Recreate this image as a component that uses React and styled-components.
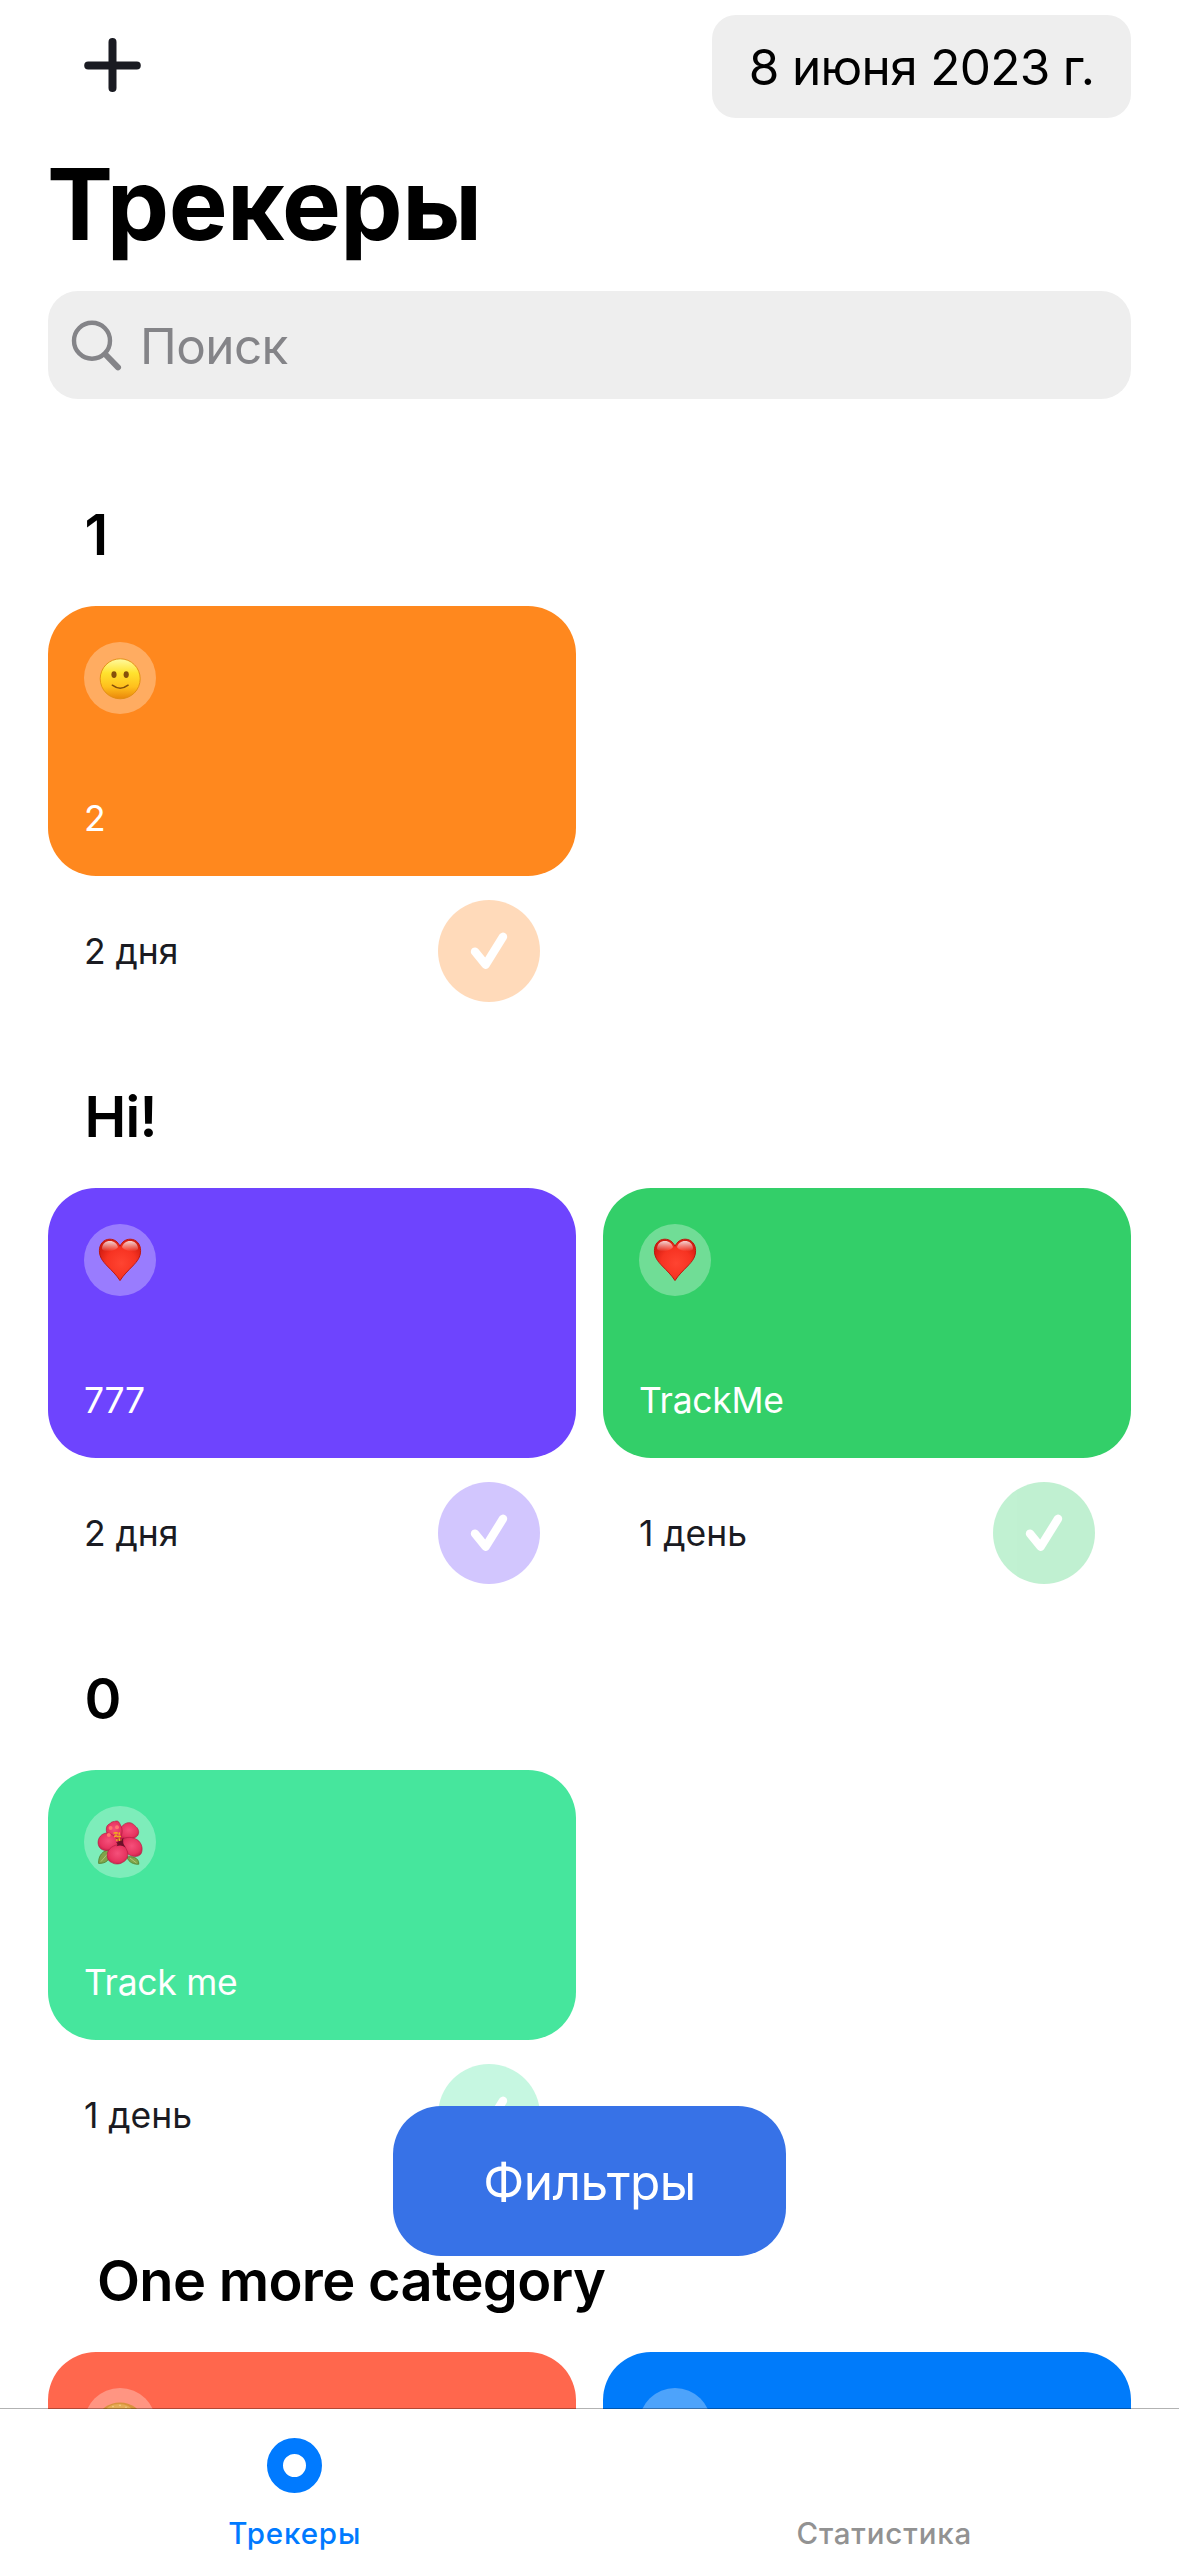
import React from "react";
import styled, { createGlobalStyle } from "styled-components";

const GlobalStyle = createGlobalStyle`
  *, *::before, *::after { box-sizing: border-box; }
  body {
    margin: 0;
    background: #fff;
    overflow: hidden;
    font-family: Inter, "Liberation Sans", sans-serif;
  }
  button { border: 0; padding: 0; background: none; font: inherit; color: inherit; }
`;

const Screen = styled.div`
  width: 1179px;
  height: 2556px;
  display: flex;
  flex-direction: column;
  overflow: hidden;
  background: #fff;
`;

const Header = styled.header`
  display: flex;
  flex-direction: column;
  flex: none;
  padding: 15px 48px 0;
`;

const NavRow = styled.div`
  display: flex;
  justify-content: space-between;
  align-items: center;
  height: 103px;
  padding-left: 36px;
`;

const AddButton = styled.button`
  display: flex;
  width: 58px;
  height: 58px;
  margin-bottom: 3px;
`;

const DatePill = styled.button`
  width: 419px;
  height: 103px;
  padding-top: 2px;
  border-radius: 24px;
  background: #eeeeee;
  color: #000;
  font-size: 49.5px;
  line-height: 101px;
  letter-spacing: -0.68px;
  text-align: center;
  white-space: nowrap;
`;

const Title = styled.h1`
  margin: 26px 0 27px -1px;
  font-size: 99px;
  font-weight: 700;
  line-height: 120px;
  letter-spacing: -0.6px;
  color: #000;
`;

const SearchField = styled.div`
  display: flex;
  align-items: center;
  gap: 16px;
  height: 108px;
  padding-left: 22px;
  border-radius: 30px;
  background: #eeeeee;
`;

const SearchIcon = styled.svg`
  flex: none;
  width: 54px;
  height: 54px;
`;

const Placeholder = styled.span`
  padding-top: 2px;
  font-size: 49.5px;
  line-height: 60px;
  letter-spacing: -0.6px;
  color: #848488;
`;

const TrackerList = styled.main`
  flex: 1;
  min-height: 0;
  overflow: hidden;
  display: flex;
  flex-direction: column;
  gap: 85px;
  padding: 106px 48px 0;
`;

const Section = styled.section`
  flex: none;
  display: flex;
  flex-direction: column;
  gap: 41px;
`;

const SectionTitle = styled.h2`
  margin: 0;
  padding-left: ${(p) => (p.$indent ? 49 : 36.5)}px;
  font-size: 56px;
  font-weight: 600;
  line-height: 60px;
  letter-spacing: -0.7px;
  color: #000;
`;

const CardGrid = styled.div`
  display: grid;
  grid-template-columns: 528px 528px;
  column-gap: 27px;
`;

const Card = styled.article`
  display: flex;
  flex-direction: column;
  justify-content: space-between;
  height: 270px;
  padding: 36px 36px 30px;
  border-radius: 48px;
  background: ${(p) => p.$color};
`;

const EmojiBadge = styled.div`
  display: flex;
  width: 72px;
  height: 72px;
  border-radius: 50%;
  background: rgba(255, 255, 255, 0.3);
`;

const CardName = styled.div`
  min-height: 54px;
  font-size: 35.5px;
  line-height: 54px;
  letter-spacing: -0.3px;
  color: #fff;
`;

const CardFooter = styled.div`
  display: flex;
  justify-content: space-between;
  align-items: center;
  padding: 24px 36px 0;
`;

const DayCount = styled.span`
  padding-top: 2px;
  font-size: 35.5px;
  line-height: 54px;
  letter-spacing: -0.05px;
  color: #1a1b22;
`;

const DoneButton = styled.button`
  display: flex;
  width: 102px;
  height: 102px;
  border-radius: 50%;
  background: ${(p) => p.$color};
  opacity: 0.3;
`;

const FilterButton = styled.button`
  position: absolute;
  left: 393px;
  top: 2106px;
  width: 393px;
  height: 150px;
  padding-top: 1px;
  border-radius: 48px;
  background: #3772e7;
  color: #fff;
  font-size: 49.5px;
  letter-spacing: -0.5px;
  text-align: center;
`;

const TabBar = styled.nav`
  position: relative;
  flex: none;
  display: grid;
  grid-template-columns: 1fr 1fr;
  height: 148px;
  margin-top: -1px;
  border-top: 1px solid rgba(0, 0, 0, 0.3);
  background: #fff;
  background-clip: padding-box;
`;

const Tab = styled.button`
  display: flex;
  flex-direction: column;
  justify-content: flex-end;
  align-items: center;
  gap: 22px;
  padding-bottom: 5px;
  color: ${(p) => (p.$active ? "#007aff" : "#929292")};
  font-size: 29.5px;
  font-weight: 500;
  line-height: 36px;
  letter-spacing: 0.85px;
`;

const TabDot = styled.span`
  width: 55px;
  height: 55px;
  border: 16.5px solid #007aff;
  border-radius: 50%;
`;

function PlusIcon() {
  return (
    <svg width="58" height="58" viewBox="0 0 58 58" stroke="#1a1b22" strokeWidth="8" strokeLinecap="round">
      <path d="M28.5 6V52M4.2 29.5H52.8" />
    </svg>
  );
}

function CheckIcon() {
  return (
    <svg width="102" height="102" viewBox="0 0 102 102" fill="none" stroke="#fff" strokeWidth="8.4" strokeLinecap="round" strokeLinejoin="round">
      <path d="M37 51.6L47.6 64.7L65 36.8" />
    </svg>
  );
}

function Smile() {
  return (
    <svg width="72" height="72" viewBox="0 0 72 72">
      <defs>
        <linearGradient id="face" x1="0" y1="0" x2="0" y2="1">
          <stop offset="0" stopColor="#fff9a0" />
          <stop offset="0.35" stopColor="#ffe32f" />
          <stop offset="0.7" stopColor="#ffc01d" />
          <stop offset="1" stopColor="#ea860a" />
        </linearGradient>
      </defs>
      <circle cx="36.2" cy="36.8" r="20" fill="url(#face)" stroke="#e08c10" strokeWidth="0.9" />
      <ellipse cx="30" cy="32.6" rx="2.6" ry="3.4" fill="#85500b" />
      <ellipse cx="42.2" cy="32.6" rx="2.6" ry="3.4" fill="#85500b" />
      <path d="M28.3 43.2Q36.2 49.2 44.1 43.2" fill="none" stroke="#85500b" strokeWidth="1.5" strokeLinecap="round" />
    </svg>
  );
}

function Heart() {
  return (
    <svg width="72" height="72" viewBox="0 0 72 72">
      <defs>
        <radialGradient id="heart" cx="0.53" cy="0.58" r="0.6">
          <stop offset="0" stopColor="#ff4431" />
          <stop offset="0.6" stopColor="#f73322" />
          <stop offset="1" stopColor="#d31d11" />
        </radialGradient>
        <linearGradient id="shine" x1="0" y1="0" x2="0" y2="1">
          <stop offset="0" stopColor="#fff" stopOpacity="0.8" />
          <stop offset="1" stopColor="#fff" stopOpacity="0" />
        </linearGradient>
      </defs>
      <path
        d="M36 56.6C33 51.6 27.6 46.4 23.3 42C18.6 37.2 15.4 33 15.4 26.6C15.4 20.2 19.6 15.2 25.8 15.2C30.6 15.2 34 18 36 22.2C38 18 41.4 15.2 46.2 15.2C52.4 15.2 56.6 20.2 56.6 26.6C56.6 33 53.4 37.2 48.7 42C44.4 46.4 39 51.6 36 56.6Z"
        fill="url(#heart)"
        stroke="#bd170e"
        strokeWidth="1"
      />
      <path d="M18 25C18 19.4 21.8 17 26 17C30 17 32.8 19.4 34 23C32 27 20.4 29.4 18 25Z" fill="url(#shine)" />
      <path d="M38 23C39.2 19.4 42 17 46 17C50.2 17 54 19.4 54 25C51.6 29.4 40 27 38 23Z" fill="url(#shine)" />
    </svg>
  );
}

function Hibiscus() {
  return (
    <svg width="72" height="72" viewBox="0 0 72 72">
      <defs>
        <radialGradient id="petal" cx="0.5" cy="0.45" r="0.65">
          <stop offset="0" stopColor="#f5507a" />
          <stop offset="0.65" stopColor="#e73460" />
          <stop offset="1" stopColor="#bd1c45" />
        </radialGradient>
      </defs>
      <path d="M26 44C18.5 44 14.2 50 14.6 57.4C21 57.6 27 55 26 44Z" fill="#7fa44a" stroke="#527a2b" strokeWidth="0.8" />
      <path d="M43 51C47 50 55.2 51 54.8 58.2C50 58.5 44.5 56.5 43 51Z" fill="#7fa44a" stroke="#527a2b" strokeWidth="0.8" />
      <path d="M17 55.5L24 47.5M52.5 57L46 52" stroke="#b5c77a" strokeWidth="0.9" />
      <path d="M26 26L38 22L46 32L42 44L32 46L24 38Z" fill="#9c1539" />
      <g fill="url(#petal)" stroke="#b01a40" strokeWidth="0.6">
        <path d="M35.5 33C33.5 26 37 18.6 43 16.9C47.6 15.8 49.5 18.4 52 20.7C55.4 23.4 55.6 28.4 52.4 30.8C47 34.4 40.6 32.6 35.5 33Z" />
        <path d="M35 33C28.4 34 22.6 30 22.3 24.4C22 20.4 23.6 18.6 25.8 17.8C27.4 15.2 30 15.8 32 15C34.6 14.6 35.2 16.6 36.4 18.8C39.4 23.6 38.4 30 35 33Z" />
        <path d="M35 38C33.4 32 27.6 26 21.2 27.2C15.6 28.6 13.4 34 14.2 38.2C15.2 43 19.4 45.2 24.4 44.2C29 43.4 33 41.4 35 38Z" />
        <path d="M37.5 33.4C43 30.2 49 31.2 53 33.6C58 36.8 59.4 43.4 57 47.8C54.2 51.8 47.8 51 43.8 47.8C39.6 44 37.6 38.4 37.5 33.4Z" />
        <path d="M39.4 38.8C32 37.6 25.4 41 23.6 46.4C22.4 51 24 55.4 28 56.6C30 58.4 35.4 58.6 38.4 56.5C43.8 54.2 45 48.4 43 44.5C41.8 42 41 40.2 39.4 38.8Z" />
      </g>
      <path d="M32 36Q35.5 37 39.5 31.5Q38 37 41.5 41.5Q37.5 38.5 32.6 40.2Q34.6 38.4 32 36Z" fill="#6d0f29" />
      <g stroke="#efb31d" strokeWidth="1.6" strokeDasharray="1.8 0.8">
        <path d="M29.5 27H36M30 30.5H37M32 34H37.5M32 26V31M35.3 27V35" />
      </g>
      <g fill="#ff776f">
        <circle cx="26.6" cy="22" r="2" />
        <circle cx="33" cy="21.2" r="2" />
        <circle cx="24.8" cy="29" r="2" />
      </g>
    </svg>
  );
}

function Bun() {
  return (
    <svg width="72" height="72" viewBox="0 0 72 72">
      <ellipse cx="36" cy="30" rx="21" ry="15.4" fill="#d9923b" />
      <ellipse cx="35" cy="23" rx="13" ry="7" fill="#e5aa55" />
      <g fill="#f3cf88">
        <circle cx="29" cy="18.6" r="0.8" />
        <circle cx="36" cy="17.4" r="0.8" />
        <circle cx="42" cy="19.2" r="0.8" />
      </g>
    </svg>
  );
}

const sections = [
  { title: "1", trackers: [{ color: "#ff881e", name: "2", days: "2 дня", Emoji: Smile }] },
  {
    title: "Hi!",
    trackers: [
      { color: "#6e44fe", name: "777", days: "2 дня", Emoji: Heart },
      { color: "#33cf69", name: "TrackMe", days: "1 день", Emoji: Heart },
    ],
  },
  { title: "0", trackers: [{ color: "#46e69d", name: "Track me", days: "1 день", Emoji: Hibiscus }] },
  {
    title: "One more category",
    indent: true,
    trackers: [{ color: "#ff674d", Emoji: Bun }, { color: "#007bfa" }],
  },
];

function Tracker({ color, name, days, Emoji }) {
  return (
    <div>
      <Card $color={color}>
        <EmojiBadge>{Emoji && <Emoji />}</EmojiBadge>
        <CardName>{name}</CardName>
      </Card>
      {days && (
        <CardFooter>
          <DayCount>{days}</DayCount>
          <DoneButton $color={color}>
            <CheckIcon />
          </DoneButton>
        </CardFooter>
      )}
    </div>
  );
}

export default function App() {
  return (
    <Screen>
      <GlobalStyle />
      <Header>
        <NavRow>
          <AddButton>
            <PlusIcon />
          </AddButton>
          <DatePill>8 июня 2023 г.</DatePill>
        </NavRow>
        <Title>Трекеры</Title>
        <SearchField>
          <SearchIcon viewBox="0 0 54 54" fill="none" stroke="#848488" strokeLinecap="round">
            <circle cx="22" cy="22.7" r="18" strokeWidth="4.4" />
            <path d="M35.5 36.5L48 49.3" strokeWidth="6" />
          </SearchIcon>
          <Placeholder>Поиск</Placeholder>
        </SearchField>
      </Header>
      <TrackerList>
        {sections.map((section) => (
          <Section key={section.title}>
            <SectionTitle $indent={section.indent}>{section.title}</SectionTitle>
            <CardGrid>
              {section.trackers.map((tracker) => (
                <Tracker key={tracker.color} {...tracker} />
              ))}
            </CardGrid>
          </Section>
        ))}
      </TrackerList>
      <FilterButton>Фильтры</FilterButton>
      <TabBar>
        <Tab $active>
          <TabDot />
          Трекеры
        </Tab>
        <Tab>Статистика</Tab>
      </TabBar>
    </Screen>
  );
}
